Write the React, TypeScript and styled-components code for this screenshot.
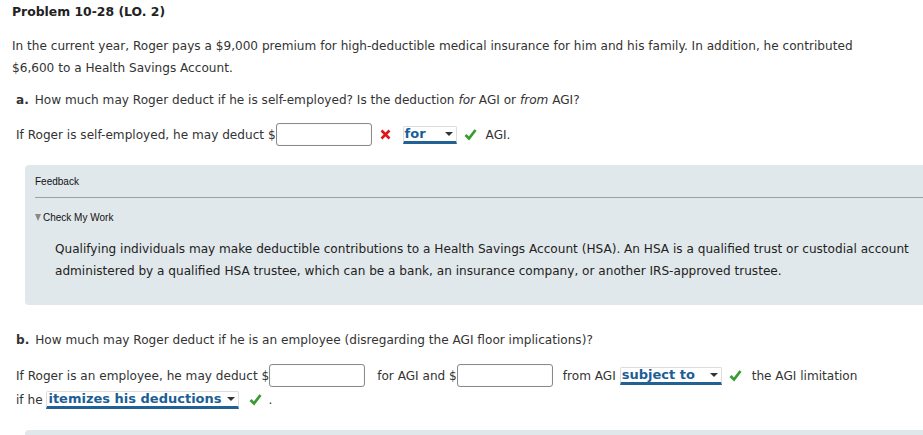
import React from "react"
import styled, { createGlobalStyle } from "styled-components"

const Global = createGlobalStyle`
  html, body { margin: 0; padding: 0; background: #fff; }
  body { font-family: "DejaVu Sans", Verdana, sans-serif; color: #333; font-size: 12.1px; }
`

const Page = styled.div`
  padding: 3px 12px 0 12px;
  overflow: hidden;
  height: 435px;
  box-sizing: border-box;
`

const Title = styled.h2`
  font-size: 12.4px;
  font-weight: bold;
  margin: 0;
  line-height: 18px;
  color: #222;
`

const Intro = styled.p`
  margin: 14px 0 0 0;
  line-height: 22px;
`

const Question = styled.p<{ top?: number }>`
  margin: ${(p) => p.top ?? 10}px 0 0 4px;
  line-height: 22px;
  b { margin-right: 6px; }
  i { font-style: italic; }
`

const AnswerLine = styled.div<{ top?: number }>`
  margin: ${(p) => p.top ?? 12}px 0 0 4px;
  line-height: 24px;
`

const Input = styled.span`
  display: inline-block;
  vertical-align: middle;
  width: 94px;
  height: 21px;
  border: 1px solid #8a8a8a;
  border-radius: 3px;
  background: #fff;
  box-shadow: inset 0 0 1px #ccc;
  margin-top: -2px;
`

const Select = styled.span<{ w: number }>`
  display: inline-flex;
  align-items: center;
  justify-content: space-between;
  vertical-align: middle;
  width: ${(p) => p.w}px;
  height: 18px;
  box-sizing: border-box;
  border: 1px solid #ddd;
  border-bottom: 3px solid #236192;
  border-radius: 2px 2px 0 0;
  padding: 0 3px 0 1px;
  color: #1b5e96;
  font-weight: bold;
  font-size: 13px;
  line-height: 14px;
  margin-top: -2px;
`

const Caret = styled.span`
  width: 0;
  height: 0;
  border-left: 4px solid transparent;
  border-right: 4px solid transparent;
  border-top: 4px solid #333;
`

const Mark = styled.span<{ l: number; r: number }>`
  display: inline-block;
  vertical-align: middle;
  margin: -3px ${(p) => p.r}px 0 ${(p) => p.l}px;
  line-height: 0;
`

const Gap = styled.span<{ w: number }>`
  display: inline-block;
  width: ${(p) => p.w}px;
`

const Panel = styled.div`
  margin: 18px -20px 0 13px;
  background: #e1e8eb;
  border-radius: 4px;
  padding: 10px 10px 23px 10px;
`

const Small = styled.div`
  font-family: "Liberation Sans", Arial, sans-serif;
  font-size: 10px;
  color: #111;
  line-height: 14px;
`

const Rule = styled.div`
  height: 1px;
  background: #9aa0a3;
  margin: 8px -10px 13px 0;
`

const Tri = styled.span`
  display: inline-block;
  width: 0;
  height: 0;
  border-left: 3px solid transparent;
  border-right: 3px solid transparent;
  border-top: 7px solid #888;
  margin-right: 2px;
`

const Explain = styled.p`
  margin: 13px 0 0 20px;
  line-height: 22px;
  color: #222;
`

const NextPanel = styled.div`
  margin: 18px -20px 0 13px;
  background: #e1e8eb;
  border-radius: 4px;
  height: 40px;
`

const Check = () => (
  <svg width="13" height="13" viewBox="0 0 13 13">
    <path d="M1.5 7 L5 10.5 L11.5 2" stroke="#3a9b35" strokeWidth="2.8" fill="none" />
  </svg>
)

const Cross = () => (
  <svg width="11" height="11" viewBox="0 0 11 11">
    <path d="M1.5 1.5 L9.5 9.5 M9.5 1.5 L1.5 9.5" stroke="#e0151c" strokeWidth="2.6" fill="none" />
  </svg>
)

export default function App() {
  return (
    <Page>
      <Global />
      <Title>Problem 10-28 (LO. 2)</Title>
      <Intro>
        In the current year, Roger pays a $9,000 premium for high-deductible medical insurance for him and his family. In addition, he contributed
        <br />
        $6,600 to a Health Savings Account.
      </Intro>
      <Question>
        <b>a.</b>How much may Roger deduct if he is self-employed? Is the deduction <i>for</i> AGI or <i>from</i> AGI?
      </Question>
      <AnswerLine>
        If Roger is self-employed, he may deduct $<Input />
        <Mark l={8} r={12}><Cross /></Mark>
        <Select w={54}>for<Caret /></Select>
        <Mark l={7} r={9}><Check /></Mark>AGI.
      </AnswerLine>
      <Panel>
        <Small>Feedback</Small>
        <Rule />
        <Small><Tri />Check My Work</Small>
        <Explain>
          Qualifying individuals may make deductible contributions to a Health Savings Account (HSA). An HSA is a qualified trust or custodial account administered by a qualified HSA trustee, which can be a bank, an insurance company, or another IRS-approved trustee.
        </Explain>
      </Panel>
      <Question top={24}>
        <b>b.</b>How much may Roger deduct if he is an employee (disregarding the AGI floor implications)?
      </Question>
      <AnswerLine top={13}>
        If Roger is an employee, he may deduct $<Input />
        <Gap w={12} />for AGI and $<Input />
        <Gap w={10} />from AGI <Select w={102}>subject to<Caret /></Select>
        <Mark l={7} r={10}><Check /></Mark>the AGI limitation
        <br />
        if he <Select w={193}>itemizes his deductions<Caret /></Select>
        <Mark l={10} r={6}><Check /></Mark>.
      </AnswerLine>
      <NextPanel />
    </Page>
  )
}
